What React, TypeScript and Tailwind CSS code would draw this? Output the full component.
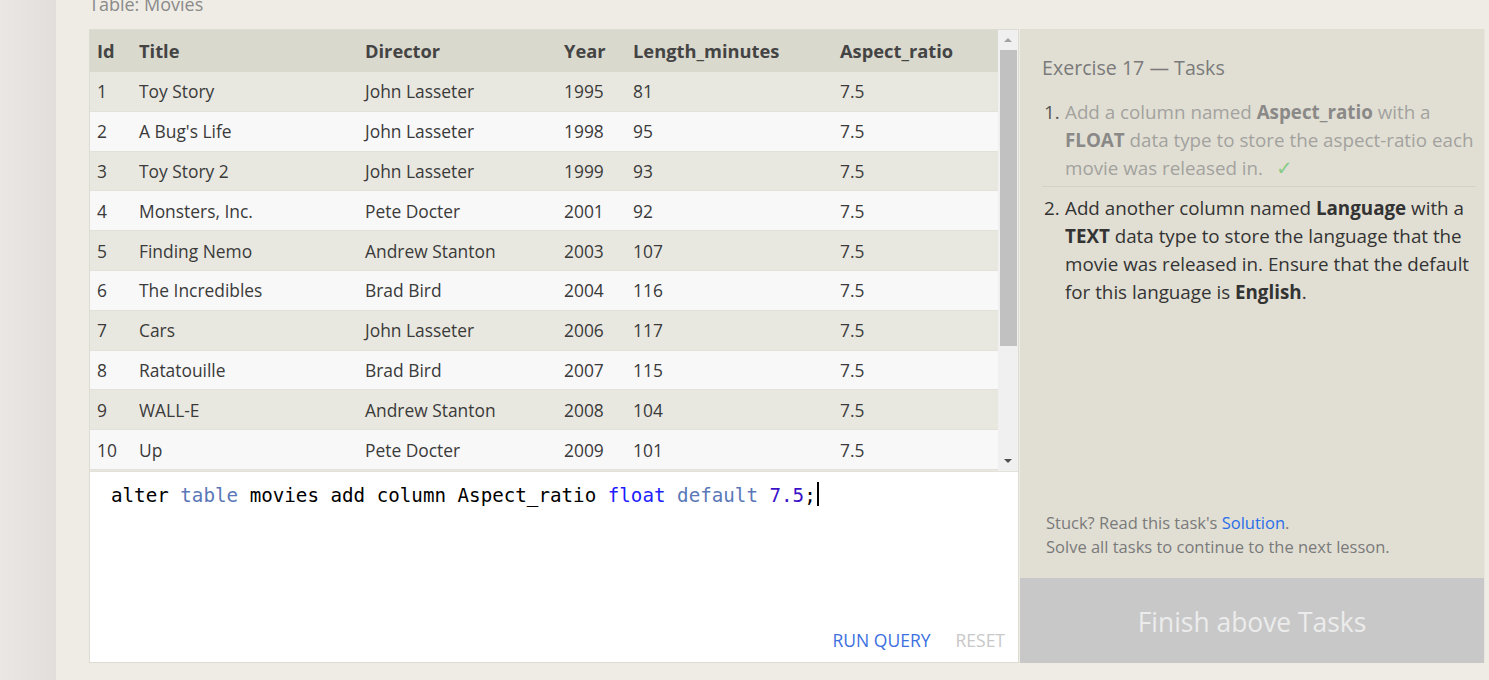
import React from "react";

const rows = [
  [1, "Toy Story", "John Lasseter", 1995, 81, "7.5"],
  [2, "A Bug's Life", "John Lasseter", 1998, 95, "7.5"],
  [3, "Toy Story 2", "John Lasseter", 1999, 93, "7.5"],
  [4, "Monsters, Inc.", "Pete Docter", 2001, 92, "7.5"],
  [5, "Finding Nemo", "Andrew Stanton", 2003, 107, "7.5"],
  [6, "The Incredibles", "Brad Bird", 2004, 116, "7.5"],
  [7, "Cars", "John Lasseter", 2006, 117, "7.5"],
  [8, "Ratatouille", "Brad Bird", 2007, 115, "7.5"],
  [9, "WALL-E", "Andrew Stanton", 2008, 104, "7.5"],
  [10, "Up", "Pete Docter", 2009, 101, "7.5"],
  [11, "Toy Story 3", "Lee Unkrich", 2010, 103, "7.5"],
  [12, "Cars 2", "John Lasseter", 2011, 120, "7.5"],
];

const cols = "grid grid-cols-[41px_226px_199px_69px_207px_166px]";

export default function App() {
  return (
    <div
      className="flex h-[680px] w-full overflow-hidden bg-[#efece5] text-[#333]"
      style={{ fontFamily: '"Open Sans", "Noto Sans", sans-serif' }}
    >
      <div className="h-full w-[56px] shrink-0 bg-gradient-to-r from-[#ebe7e4] to-[#e1dedb]" />
      <div className="flex min-w-0 flex-1 flex-col pl-[33px] pr-[4px]">
        <div className="h-[29px] shrink-0 overflow-hidden">
          <div className="mt-[-5px] text-[18px] leading-[18px] text-[#8a8a8a]">Table: Movies</div>
        </div>
        <div className="flex h-[634px] shrink-0">
          {/* left: table + editor */}
          <div className="flex w-[930px] shrink-0 flex-col border border-[#dddcd2] bg-white">
            <div className="flex h-[442px] shrink-0 border-b border-[#e3e2da]">
              <div className="w-[908px] overflow-hidden">
                <div className={`${cols} h-[42px] items-center bg-[#dad9ce] text-[18.3px] font-bold text-[#444]`}>
                  <div className="pl-[7px]">Id</div>
                  <div className="pl-[8px]">Title</div>
                  <div className="pl-[8px]">Director</div>
                  <div className="pl-[8px]">Year</div>
                  <div className="pl-[8px]">Length_minutes</div>
                  <div className="pl-[8px]">Aspect_ratio</div>
                </div>
                {rows.map((r, i) => (
                  <div
                    key={i}
                    className={`${cols} h-[39.8px] items-center border-b border-[#e2e1da] text-[17.4px] text-[#3a3a3a] ${
                      i % 2 === 0 ? "bg-[#e9e8e0]" : "bg-[#f8f8f8]"
                    }`}
                  >
                    <div className="pl-[7px]">{r[0]}</div>
                    <div className="pl-[8px]">{r[1]}</div>
                    <div className="pl-[8px]">{r[2]}</div>
                    <div className="pl-[8px]">{r[3]}</div>
                    <div className="pl-[8px]">{r[4]}</div>
                    <div className="pl-[8px]">{r[5]}</div>
                  </div>
                ))}
              </div>
              {/* scrollbar */}
              <div className="flex w-[20px] shrink-0 flex-col items-center bg-[#f0f0f0]">
                <div className="flex h-[20px] w-full items-center justify-center">
                  <div className="h-0 w-0 border-x-[4px] border-b-[4px] border-x-transparent border-b-[#a3a3a3]" />
                </div>
                <div className="h-[296px] w-[17px] bg-[#c1c1c1]" />
                <div className="flex-1" />
                <div className="flex h-[20px] w-full items-center justify-center">
                  <div className="h-0 w-0 border-x-[4px] border-t-[4px] border-x-transparent border-t-[#505050]" />
                </div>
              </div>
            </div>
            <div className="relative flex flex-1 flex-col bg-white">
              <div
                className="pl-[21px] pt-[6px] text-[19.2px] leading-[26px] text-black"
                style={{ fontFamily: '"DejaVu Sans Mono", "Liberation Mono", monospace' }}
              >
                alter <span className="text-[#5a78b8]">table</span> movies add column Aspect_ratio{" "}
                <span className="text-[#1d1dff]">float</span> <span className="text-[#5a78b8]">default</span>{" "}
                <span className="text-[#3a10c8]">7.5</span>;<span className="ml-[1px] inline-block h-[24px] w-[2px] translate-y-[4px] bg-black" />
              </div>
              <div className="flex-1" />
              <div className="flex justify-end gap-[25px] pb-[9px] pr-[13px] text-[17.5px]">
                <span className="text-[#3d6fe0]">RUN QUERY</span>
                <span className="text-[#c8c8c8]">RESET</span>
              </div>
            </div>
          </div>
          {/* right panel */}
          <div className="ml-[1px] flex w-[465px] shrink-0 flex-col border-r border-[#e8e6df]">
            <div className="flex flex-1 flex-col bg-[#e1dfd4] pl-[22px] pr-[8px]">
              <div className="pt-[26px] text-[19.6px] leading-[26px] text-[#7a7a7a]">Exercise 17 — Tasks</div>
              <ol className="mt-[17px] text-[18.8px] leading-[28px]">
                <li className="flex border-b border-[#d4d2c8] pb-[4px]">
                  <span className="w-[23px] shrink-0 pl-[2px] text-[#555]">1.</span>
                  <span className="text-[#a3a29e]">
                    Add a column named <b className="text-[#8a8987]">Aspect_ratio</b> with a{" "}
                    <b className="text-[#8a8987]">FLOAT</b> data type to store the aspect-ratio each movie was released in.{" "}
                    <span className="ml-[8px] text-[20px] text-[#88cc88]">✓</span>
                  </span>
                </li>
                <li className="flex pt-[7px] text-[#333]">
                  <span className="w-[23px] shrink-0 pl-[2px]">2.</span>
                  <span>
                    Add another column named <b>Language</b> with a <b>TEXT</b> data type to store the language that the movie was
                    released in. Ensure that the default for this language is <b>English</b>.
                  </span>
                </li>
              </ol>
              <div className="flex-1" />
              <div className="pb-[19px] pl-[4px] text-[16.5px] leading-[24px] text-[#7a7a7a]">
                <div>
                  Stuck? Read this task's <span className="text-[#2a6ee8]">Solution</span>.
                </div>
                <div>Solve all tasks to continue to the next lesson.</div>
              </div>
            </div>
            <div className="flex h-[85px] shrink-0 items-center justify-center bg-[#c8c8c8] pt-[4px] text-[26.4px] text-[#ececec]">
              Finish above Tasks
            </div>
          </div>
        </div>
      </div>
    </div>
  );
}
